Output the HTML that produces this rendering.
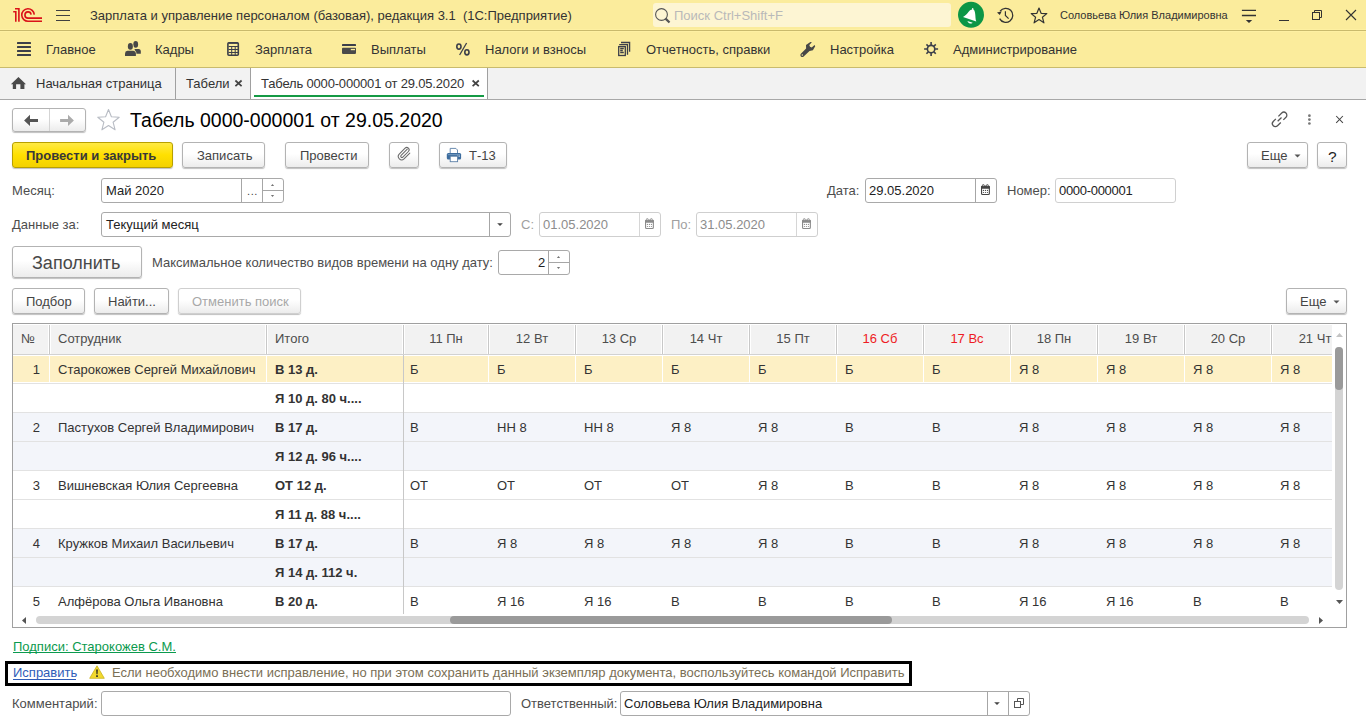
<!DOCTYPE html><html><head><meta charset="utf-8"><style>
*{box-sizing:border-box;margin:0;padding:0}
html,body{width:1366px;height:728px;overflow:hidden;background:#fff}
body{position:relative;font-family:"Liberation Sans",sans-serif;font-size:13px;line-height:15px;color:#333}
.a{position:absolute}
.t{position:absolute;white-space:nowrap;font-size:13px;line-height:15px}
.ybar{background:#FBEC9C}
.btn{position:absolute;border:1px solid #b3b3b3;border-radius:3px;background:linear-gradient(#ffffff,#ffffff 45%,#ececec);box-shadow:0 1px 1px rgba(0,0,0,.25);color:#444;text-align:center}
.inp{position:absolute;border:1px solid #a9a9a9;border-radius:3px;background:#fff}
.inpd{position:absolute;border:1px solid #cfcfcf;border-radius:3px;background:#fff}
.vs{position:absolute;top:0;bottom:0;width:1px;background:#b9b9b9}
.lbl{color:#4d4d4d}
.hd{position:absolute;top:0;height:30px;background:#f2f2f2;border-left:1px solid #fff;border-right:1px solid #fff}
.row{position:absolute;left:0;width:1319px;height:29px;border-bottom:1px solid #e0e0e0}
.sel{background:#FDF0C5}
.alt{background:#F3F5FA}
.b{font-weight:bold}
.red{color:#e0141e}
</style></head><body>
<div class="a ybar" style="left:0;top:0;width:1366px;height:30px"></div>
<div class="a" style="left:0;top:29px;width:1366px;height:1px;background:#FEF0A2"></div>
<div class="a" style="left:0;top:30px;width:1366px;height:1px;background:#C9BA6C"></div>
<div class="a ybar" style="left:0;top:31px;width:1366px;height:36px"></div>
<div class="a" style="left:0;top:31px;width:1366px;height:1px;background:#FEF0A2"></div>
<div class="a" style="left:0;top:67px;width:1366px;height:1px;background:#C9BB6D"></div>
<svg class="a" style="left:10px;top:4px" width="36" height="22" viewBox="10 4 36 22">
<g fill="none" stroke="#DA1219" stroke-width="1.6">
<path d="M13.2 11.7 H15.8 V21.8"/>
<path d="M15 8.7 H18.9 V21.8"/>
<path d="M34.25 14.6 A6.25 6.25 0 1 0 28.25 21.2 H42"/>
<path d="M31.1 14.6 A3.1 3.1 0 1 0 28 18.1 H42"/>
</g></svg>
<div class="a" style="left:56px;top:10px;width:14px;height:1px;background:#404040"></div>
<div class="a" style="left:56px;top:15px;width:14px;height:1px;background:#404040"></div>
<div class="a" style="left:56px;top:20px;width:14px;height:1px;background:#404040"></div>
<div class="t " style="left:90px;top:8px;color:#333">Зарплата и управление персоналом (базовая), редакция 3.1&nbsp; (1С:Предприятие)</div>
<div class="a" style="left:653px;top:3px;width:298px;height:24px;background:#FDF5D3;border-radius:3px"></div>
<svg class="a" style="left:654px;top:7px" width="18" height="18" viewBox="0 0 18 18"><circle cx="7.5" cy="7.5" r="5.9" fill="none" stroke="#555" stroke-width="1.1"/><path d="M11.6 11.6 L15.5 15.5" stroke="#555" stroke-width="2.2"/></svg>
<div class="t " style="left:674px;top:8px;color:#b9b9b9">Поиск Ctrl+Shift+F</div>
<svg class="a" style="left:956px;top:0px" width="30" height="30" viewBox="956 0 30 30"><circle cx="971" cy="14.85" r="13" fill="#0C9646"/>
<path d="M970.5 10 C968.5 11.5 967.5 14 963 17.1 L976.3 21.5 C975.3 19 975.6 16.5 975.2 14 C974.9 11.5 974.4 10.2 973.4 9.6 L973.2 8 L972.2 8.1 L972.1 9.5 C971.5 9.5 971 9.7 970.5 10 Z" fill="#fff"/>
<path d="M967.4 21 L972.7 22.7 C972 24 968.5 24 967.4 21 Z" fill="#fff"/></svg>
<svg class="a" style="left:994px;top:4px" width="22" height="22" viewBox="994 4 22 22"><path d="M1000.1 11.2 A7 7 0 1 1 999.6 18.6" fill="none" stroke="#333" stroke-width="1.3"/><path d="M997 12.4 L1001.8 11.3 L999.8 15.1Z" fill="#333"/><path d="M1005.4 11.2 V15.5 L1008.6 18.6" fill="none" stroke="#333" stroke-width="1.2"/></svg>
<svg class="a" style="left:1030px;top:7px" width="18" height="17" viewBox="0 0 18 17"><path d="M9 1 L11.1 6.3 L16.8 6.6 L12.4 10.2 L13.9 15.8 L9 12.6 L4.1 15.8 L5.6 10.2 L1.2 6.6 L6.9 6.3Z" fill="none" stroke="#333" stroke-width="1.2" stroke-linejoin="round"/></svg>
<div class="t " style="left:1060px;top:8px;font-size:11px;color:#333">Соловьева Юлия Владимировна</div>
<svg class="a" style="left:1240px;top:6px" width="18" height="20" viewBox="1240 6 18 20"><path d="M1241.9 10.4 H1256 M1241.9 15.5 H1256" stroke="#333" stroke-width="1.3"/><path d="M1245.8 19.9 H1252.2 L1249 22.9Z" fill="#333"/></svg>
<div class="a" style="left:1279px;top:20px;width:10px;height:1px;background:#333"></div>
<svg class="a" style="left:1311px;top:9px" width="12" height="12" viewBox="0 0 12 12"><rect x="1.5" y="3.5" width="7" height="7" fill="none" stroke="#333"/><path d="M3.5 3.5 V1.5 H10.5 V8.5 H8.5" fill="none" stroke="#333"/></svg>
<svg class="a" style="left:1345px;top:9px" width="12" height="12" viewBox="0 0 12 12"><path d="M1 1 L11 11 M11 1 L1 11" stroke="#333" stroke-width="1.1"/></svg>
<svg class="a" style="left:16px;top:41px" width="16" height="16" viewBox="16 41 16 16"><g fill="#3c3f4a"><rect x="17" y="42" width="14" height="2" rx="0.5"/><rect x="17" y="46" width="14" height="2" rx="0.5"/><rect x="17" y="50" width="14" height="2" rx="0.5"/><rect x="17" y="54" width="14" height="2" rx="0.5"/></g></svg>
<div class="t " style="left:46px;top:42px;color:#333">Главное</div>
<svg class="a" style="left:122px;top:39px" width="22" height="20" viewBox="122 39 22 20"><g fill="#474747"><ellipse cx="135.7" cy="44.4" rx="2.4" ry="3.3"/><path d="M134.5 49 H139 Q140.8 49.3 140.8 51 V53.8 H135.5Z"/><ellipse cx="130.35" cy="46.4" rx="3" ry="3.7" fill="#FBEC9C"/><path d="M127.5 50.1 H133.3 Q136.4 50.5 136.4 53.5 V56.5 H134 V53.5 Z" fill="#FBEC9C"/><ellipse cx="130.35" cy="46.4" rx="2.5" ry="3.3"/><path d="M127.5 50.8 H133.3 Q135.9 51 135.9 53.5 V55.9 H125 V53.5 Q125 51 127.5 50.8Z"/></g></svg>
<div class="t " style="left:155px;top:42px;color:#333">Кадры</div>
<svg class="a" style="left:225px;top:40px" width="16" height="18" viewBox="225 40 16 18"><rect x="227.9" y="42.7" width="10.4" height="12.5" rx="1" fill="none" stroke="#3c3f4a" stroke-width="1.6"/><rect x="228.5" y="42.5" width="9.5" height="1.3" fill="#3c3f4a"/><rect x="228.5" y="46" width="9.5" height="1" fill="#3c3f4a"/><g fill="#3c3f4a"><rect x="231.2" y="46.5" width="1" height="9"/><rect x="234.7" y="46.5" width="1" height="9"/><rect x="228.5" y="49" width="9.5" height="1"/><rect x="228.5" y="52" width="9.5" height="1"/></g></svg>
<div class="t " style="left:255px;top:42px;color:#333">Зарплата</div>
<svg class="a" style="left:340px;top:42px" width="18" height="14" viewBox="340 42 18 14"><rect x="342" y="44" width="14" height="2" rx="0.6" fill="#3c3f4a"/><rect x="342" y="47.7" width="14" height="6.2" rx="0.8" fill="#4a4a4a"/><rect x="350.8" y="48.9" width="4.2" height="1.3" fill="#FBEC9C"/></svg>
<div class="t " style="left:371px;top:42px;color:#333">Выплаты</div>
<svg class="a" style="left:454px;top:41px" width="18" height="16" viewBox="454 41 18 16"><g fill="none" stroke="#3c3f4a"><ellipse cx="458.9" cy="46.6" rx="2.1" ry="2.6" stroke-width="1.6"/><ellipse cx="466.9" cy="52.3" rx="2.1" ry="2.6" stroke-width="1.6"/><path d="M466.6 43 L459.6 55" stroke-width="1.3"/></g></svg>
<div class="t " style="left:485px;top:42px;color:#333">Налоги и взносы</div>
<svg class="a" style="left:616px;top:41px" width="16" height="17" viewBox="616 41 16 17"><g fill="none" stroke="#3c3f4a" stroke-width="1.3"><rect x="618.7" y="46.6" width="6.6" height="8.9"/><path d="M621 42.5 H629.6 V51.8"/><path d="M619.2 44.6 H627.5 V54.8"/><path d="M620.2 48.5 H623.8 M620.2 50.5 H622.8 M620.2 52.5 H623.8"/></g></svg>
<div class="t " style="left:646px;top:42px;color:#333">Отчетность, справки</div>
<svg class="a" style="left:799px;top:40px" width="18" height="18" viewBox="799 40 18 18"><path d="M806.0 45.0 L810.4 41.9 L811.9 42.2 L809.3 45.0 Q809.5 47.3 811.7 47.6 L814.6 44.9 L815.2 46.3 L812.9 50.3 L809.5 50.9 L803.7 56.5 C802.7 57.4 801 57.1 800.6 56 C800.2 55.1 800.4 54.3 801.1 53.6 L806.1 48.5 Z" fill="#474747"/><circle cx="802.3" cy="54.9" r="0.75" fill="#FBEC9C"/></svg>
<div class="t " style="left:830px;top:42px;color:#333">Настройка</div>
<svg class="a" style="left:922px;top:40px" width="18" height="18" viewBox="922 40 18 18"><g transform="translate(931.1 49.05)"><circle r="3.7" fill="none" stroke="#3c3f4a" stroke-width="1.6"/><g stroke="#3c3f4a" stroke-width="1.6"><path d="M0 -7 V-4 M0 7 V4 M-7 0 H-4 M7 0 H4"/><g transform="rotate(45)"><path d="M0 -6.6 V-4 M0 6.6 V4 M-6.6 0 H-4 M6.6 0 H4"/></g></g></g></svg>
<div class="t " style="left:953px;top:42px;color:#333">Администрирование</div>
<div class="a" style="left:0;top:68px;width:1366px;height:31px;background:#F2F2F2"></div>
<div class="a" style="left:0;top:99px;width:1366px;height:1px;background:#A8A8A8"></div>
<div class="a" style="left:176px;top:68px;width:74px;height:31px;background:#F2F2F2"></div>
<div class="a" style="left:251px;top:68px;width:236px;height:31px;background:#fff"></div>
<div class="a" style="left:175px;top:68px;width:1px;height:31px;background:#A0A0A0"></div>
<div class="a" style="left:250px;top:68px;width:1px;height:31px;background:#A0A0A0"></div>
<div class="a" style="left:487px;top:68px;width:1px;height:31px;background:#A0A0A0"></div>
<div class="a" style="left:254px;top:95px;width:230px;height:2px;background:#159A45"></div>
<svg class="a" style="left:10px;top:76px" width="17" height="14" viewBox="10 76 17 14"><path d="M10.9 84.2 L18.45 76.9 L26 84.2 H24.4 V89 H20.4 V84.2 H16.1 V89 H12.8 V84.2 Z" fill="#4a4a4a"/></svg>
<div class="t " style="left:36px;top:76px;color:#333">Начальная страница</div>
<div class="t " style="left:186px;top:76px;color:#333">Табели</div>
<svg class="a" style="left:233px;top:78px" width="11" height="11" viewBox="233 78 11 11"><path d="M235.4 80.5 L241.6 86.2 M241.6 80.5 L235.4 86.2" stroke="#444" stroke-width="1.7"/></svg>
<div class="t " style="left:261px;top:76px;color:#333;letter-spacing:-0.17px">Табель 0000-000001 от 29.05.2020</div>
<svg class="a" style="left:470px;top:78px" width="11" height="11" viewBox="470 78 11 11"><path d="M472.6 80.5 L478.8 86.2 M478.8 80.5 L472.6 86.2" stroke="#444" stroke-width="1.7"/></svg>
<div class="btn" style="left:12px;top:108px;width:74px;height:24px"></div>
<div class="a" style="left:49px;top:109px;width:1px;height:22px;background:#d4d4d4"></div>
<svg class="a" style="left:22px;top:112px" width="54" height="16" viewBox="22 112 54 16"><path d="M24.1 120.4 L30 114.8 V118.9 H38 V121.9 H30 V126Z" fill="#555"/><path d="M73.9 120.4 L68 114.8 V118.9 H60.1 V121.9 H68 V126Z" fill="#ababab"/></svg>
<svg class="a" style="left:96px;top:108px" width="25" height="24" viewBox="0 0 25 24"><path d="M12.5 1.5 L15.4 8.8 L23.2 9.2 L17.1 14.2 L19.1 21.8 L12.5 17.5 L5.9 21.8 L7.9 14.2 L1.8 9.2 L9.6 8.8Z" fill="none" stroke="#b8bcc4" stroke-width="1.1" stroke-linejoin="round"/></svg>
<div class="t" style="left:130px;top:109px;font-size:19.5px;line-height:22px;color:#000">Табель 0000-000001 от 29.05.2020</div>
<svg class="a" style="left:1268px;top:108px" width="24" height="24" viewBox="1268 108 24 24"><g transform="rotate(-45 1279.6 119.4)" fill="none" stroke="#555" stroke-width="1.25"><path d="M1280.9 116.4 H1285.6 A3.0 3.0 0 0 1 1285.6 122.4 H1281.9"/><path d="M1278.3 122.4 H1273.6 A3.0 3.0 0 0 1 1273.6 116.4 H1277.3"/><path d="M1276.9 119.4 H1282.3"/></g></svg>
<svg class="a" style="left:1306px;top:112px" width="8" height="16" viewBox="1306 112 8 16"><g fill="#777"><circle cx="1309.4" cy="115.7" r="1.35"/><circle cx="1309.4" cy="119.6" r="1.35"/><circle cx="1309.4" cy="123.5" r="1.35"/></g></svg>
<svg class="a" style="left:1334px;top:114px" width="11" height="11" viewBox="1334 114 11 11"><path d="M1336.2 116 L1342.9 122.9 M1342.9 116 L1336.2 122.9" stroke="#444" stroke-width="1.05"/></svg>
<div class="btn" style="left:12px;top:142px;width:161px;height:26px;background:linear-gradient(#FFEA45,#FFE000 50%,#F3D100);border-color:#B8A000;color:#333"></div>
<div class="t b" style="left:26px;top:148px;color:#383838">Провести и закрыть</div>
<div class="btn" style="left:182px;top:142px;width:83px;height:26px"></div>
<div class="t " style="left:197px;top:148px;color:#444">Записать</div>
<div class="btn" style="left:285px;top:142px;width:84px;height:26px"></div>
<div class="t " style="left:300px;top:148px;color:#444">Провести</div>
<div class="btn" style="left:389px;top:142px;width:30px;height:26px"></div>
<svg class="a" style="left:394px;top:145px" width="20" height="20" viewBox="394 145 20 20"><path d="M407.3 149.2 L401.1 155.4 A1.2 1.2 0 0 0 402.8 157.1 L408.4 151.5 A2.3 2.3 0 0 0 405.1 148.2 L399.2 154.1 A3.4 3.4 0 0 0 404 158.9 L409.8 153.1" fill="none" stroke="#6a6a6a" stroke-width="1.05" stroke-linecap="round"/></svg>
<div class="btn" style="left:439px;top:142px;width:68px;height:26px"></div>
<svg class="a" style="left:445px;top:146px" width="18" height="18" viewBox="445 146 18 18"><path d="M450.2 153.5 V148.4 H455.9 L457.5 150 V153.5" fill="#fff" stroke="#5a7ea6" stroke-width="0.9"/><rect x="446.8" y="153" width="14.3" height="6.6" rx="1.5" fill="#3C6C9E"/><rect x="447.8" y="154.3" width="12.3" height="0.8" fill="#7fa3c7"/><rect x="457.3" y="155.6" width="1" height="1" fill="#fff"/><rect x="458.8" y="155.6" width="1" height="1" fill="#fff"/><rect x="450.2" y="156.2" width="7.4" height="5.5" fill="#fff" stroke="#5a7ea6" stroke-width="0.9"/></svg>
<div class="t " style="left:469px;top:148px;color:#444">Т-13</div>
<div class="btn" style="left:1247px;top:142px;width:61px;height:26px"></div>
<div class="t " style="left:1261px;top:148px;color:#444">Еще</div>
<svg class="a" style="left:1294px;top:154px" width="7" height="4" viewBox="0 0 7 4"><path d="M0.5 0.5H6.5L3.5 3.5Z" fill="#555"/></svg>
<div class="btn" style="left:1317px;top:142px;width:30px;height:26px"></div>
<div class="t" style="left:1328px;top:148px;font-size:15.5px;line-height:18px;color:#222">?</div>
<div class="t lbl" style="left:12px;top:183px;">Месяц:</div>
<div class="inp" style="left:101px;top:178px;width:183px;height:25px"></div>
<div class="a" style="left:241px;top:179px;width:1px;height:23px;background:#a6a6a6"></div>
<div class="a" style="left:262px;top:179px;width:1px;height:23px;background:#a6a6a6"></div>
<div class="a" style="left:263px;top:190px;width:20px;height:1px;background:#a6a6a6"></div>
<div class="t " style="left:247px;top:184px;color:#444;font-size:11px;letter-spacing:0.6px">...</div>
<svg class="a" style="left:270px;top:183px" width="5" height="4" viewBox="0 0 5 4"><path d="M0.9 2.8H4.1L2.5 1.2Z" fill="#444"/></svg>
<svg class="a" style="left:270px;top:194px" width="5" height="4" viewBox="0 0 5 4"><path d="M0.9 1.2H4.1L2.5 2.8Z" fill="#444"/></svg>
<div class="t " style="left:106px;top:183px;color:#222">Май 2020</div>
<div class="t lbl" style="left:827px;top:183px;">Дата:</div>
<div class="inp" style="left:865px;top:178px;width:132px;height:25px"></div>
<div class="a" style="left:975px;top:179px;width:1px;height:23px;background:#a6a6a6"></div>
<svg class="a" style="left:980px;top:184px" width="12" height="12" viewBox="980 184 12 12"><rect x="981.55" y="186.3" width="7.8" height="8.2" rx="1" fill="#fff" stroke="#444" stroke-width="1.1"/><rect x="981" y="185.8" width="8.9" height="2.9" rx="1" fill="#444"/><circle cx="983.3" cy="185.3" r="0.85" fill="#fff" stroke="#444" stroke-width="0.7"/><circle cx="987.4" cy="185.3" r="0.85" fill="#fff" stroke="#444" stroke-width="0.7"/><circle cx="983.4" cy="190.4" r="0.6" fill="#444"/><circle cx="983.4" cy="192.5" r="0.6" fill="#444"/><circle cx="985.4" cy="190.4" r="0.6" fill="#444"/><circle cx="985.4" cy="192.5" r="0.6" fill="#444"/><circle cx="987.4" cy="190.4" r="0.6" fill="#444"/><circle cx="987.4" cy="192.5" r="0.6" fill="#444"/></svg>
<div class="t " style="left:869px;top:183px;color:#222">29.05.2020</div>
<div class="t lbl" style="left:1007px;top:183px;">Номер:</div>
<div class="inpd" style="left:1055px;top:178px;width:121px;height:25px;border-color:#d0d0d0"></div>
<div class="t " style="left:1059px;top:183px;color:#222;letter-spacing:-0.3px">0000-000001</div>
<div class="t lbl" style="left:12px;top:217px;">Данные за:</div>
<div class="inp" style="left:101px;top:212px;width:410px;height:25px"></div>
<div class="a" style="left:489px;top:213px;width:1px;height:23px;background:#a6a6a6"></div>
<svg class="a" style="left:496px;top:222px" width="8" height="5" viewBox="0 0 8 5"><path d="M1.2 1.3H6.8L4 4Z" fill="#444"/></svg>
<div class="t " style="left:106px;top:217px;color:#222">Текущий месяц</div>
<div class="t " style="left:521px;top:217px;color:#a0a0a0">С:</div>
<div class="inpd" style="left:539px;top:212px;width:122px;height:25px"></div>
<div class="a" style="left:639px;top:213px;width:1px;height:23px;background:#d6d6d6"></div>
<svg class="a" style="left:644px;top:218px" width="12" height="12" viewBox="644 218 12 12"><rect x="645.55" y="220.3" width="7.8" height="8.2" rx="1" fill="#fff" stroke="#8a8a8a" stroke-width="1.1"/><rect x="645" y="219.8" width="8.9" height="2.9" rx="1" fill="#8a8a8a"/><circle cx="647.3" cy="219.3" r="0.85" fill="#fff" stroke="#8a8a8a" stroke-width="0.7"/><circle cx="651.4" cy="219.3" r="0.85" fill="#fff" stroke="#8a8a8a" stroke-width="0.7"/><circle cx="647.4" cy="224.4" r="0.6" fill="#8a8a8a"/><circle cx="647.4" cy="226.5" r="0.6" fill="#8a8a8a"/><circle cx="649.4" cy="224.4" r="0.6" fill="#8a8a8a"/><circle cx="649.4" cy="226.5" r="0.6" fill="#8a8a8a"/><circle cx="651.4" cy="224.4" r="0.6" fill="#8a8a8a"/><circle cx="651.4" cy="226.5" r="0.6" fill="#8a8a8a"/></svg>
<div class="t " style="left:543px;top:217px;color:#8c8c8c">01.05.2020</div>
<div class="t " style="left:671px;top:217px;color:#a0a0a0">По:</div>
<div class="inpd" style="left:696px;top:212px;width:122px;height:25px"></div>
<div class="a" style="left:796px;top:213px;width:1px;height:23px;background:#d6d6d6"></div>
<svg class="a" style="left:801px;top:218px" width="12" height="12" viewBox="801 218 12 12"><rect x="802.55" y="220.3" width="7.8" height="8.2" rx="1" fill="#fff" stroke="#8a8a8a" stroke-width="1.1"/><rect x="802" y="219.8" width="8.9" height="2.9" rx="1" fill="#8a8a8a"/><circle cx="804.3" cy="219.3" r="0.85" fill="#fff" stroke="#8a8a8a" stroke-width="0.7"/><circle cx="808.4" cy="219.3" r="0.85" fill="#fff" stroke="#8a8a8a" stroke-width="0.7"/><circle cx="804.4" cy="224.4" r="0.6" fill="#8a8a8a"/><circle cx="804.4" cy="226.5" r="0.6" fill="#8a8a8a"/><circle cx="806.4" cy="224.4" r="0.6" fill="#8a8a8a"/><circle cx="806.4" cy="226.5" r="0.6" fill="#8a8a8a"/><circle cx="808.4" cy="224.4" r="0.6" fill="#8a8a8a"/><circle cx="808.4" cy="226.5" r="0.6" fill="#8a8a8a"/></svg>
<div class="t " style="left:700px;top:217px;color:#8c8c8c">31.05.2020</div>
<div class="btn" style="left:12px;top:246px;width:130px;height:32px"></div>
<div class="t" style="left:32px;top:253px;font-size:18px;line-height:20px;color:#484848">Заполнить</div>
<div class="t lbl" style="left:152px;top:255px;">Максимальное количество видов времени на одну дату:</div>
<div class="inp" style="left:498px;top:250px;width:72px;height:25px"></div>
<div class="a" style="left:548px;top:251px;width:1px;height:23px;background:#a6a6a6"></div>
<div class="a" style="left:549px;top:262px;width:20px;height:1px;background:#a6a6a6"></div>
<svg class="a" style="left:556px;top:255px" width="5" height="4" viewBox="0 0 5 4"><path d="M0.9 2.8H4.1L2.5 1.2Z" fill="#444"/></svg>
<svg class="a" style="left:556px;top:266px" width="5" height="4" viewBox="0 0 5 4"><path d="M0.9 1.2H4.1L2.5 2.8Z" fill="#444"/></svg>
<div class="t " style="left:538px;top:255px;color:#222">2</div>
<div class="btn" style="left:12px;top:288px;width:73px;height:26px"></div>
<div class="t " style="left:26px;top:294px;color:#444">Подбор</div>
<div class="btn" style="left:94px;top:288px;width:75px;height:26px"></div>
<div class="t " style="left:108px;top:294px;color:#444">Найти...</div>
<div class="btn" style="left:178px;top:288px;width:123px;height:26px;border-color:#cfcfcf"></div>
<div class="t " style="left:192px;top:294px;color:#a8a8a8">Отменить поиск</div>
<div class="btn" style="left:1286px;top:288px;width:61px;height:26px"></div>
<div class="t " style="left:1300px;top:294px;color:#444">Еще</div>
<svg class="a" style="left:1333px;top:300px" width="7" height="4" viewBox="0 0 7 4"><path d="M0.5 0.5H6.5L3.5 3.5Z" fill="#555"/></svg>
<div class="a" style="left:12px;top:323px;width:1335px;height:305px;border:1px solid #A0A0A0;background:#fff;overflow:hidden">
<div class="a" style="left:0;top:0;width:1319px;height:290px;overflow:hidden">
<div class="a" style="left:0;top:0;width:1319px;height:30px;background:#F2F2F2"></div>
<div class="a" style="left:35px;top:0;width:3px;height:30px;background:#fff"></div>
<div class="a" style="left:36px;top:0;width:1px;height:30px;background:#C8C8C8"></div>
<div class="a" style="left:252px;top:0;width:3px;height:30px;background:#fff"></div>
<div class="a" style="left:253px;top:0;width:1px;height:30px;background:#C8C8C8"></div>
<div class="a" style="left:389px;top:0;width:3px;height:30px;background:#fff"></div>
<div class="a" style="left:390px;top:0;width:1px;height:30px;background:#C8C8C8"></div>
<div class="a" style="left:474px;top:0;width:3px;height:30px;background:#fff"></div>
<div class="a" style="left:475px;top:0;width:1px;height:30px;background:#C8C8C8"></div>
<div class="a" style="left:561px;top:0;width:3px;height:30px;background:#fff"></div>
<div class="a" style="left:562px;top:0;width:1px;height:30px;background:#C8C8C8"></div>
<div class="a" style="left:648px;top:0;width:3px;height:30px;background:#fff"></div>
<div class="a" style="left:649px;top:0;width:1px;height:30px;background:#C8C8C8"></div>
<div class="a" style="left:735px;top:0;width:3px;height:30px;background:#fff"></div>
<div class="a" style="left:736px;top:0;width:1px;height:30px;background:#C8C8C8"></div>
<div class="a" style="left:822px;top:0;width:3px;height:30px;background:#fff"></div>
<div class="a" style="left:823px;top:0;width:1px;height:30px;background:#C8C8C8"></div>
<div class="a" style="left:909px;top:0;width:3px;height:30px;background:#fff"></div>
<div class="a" style="left:910px;top:0;width:1px;height:30px;background:#C8C8C8"></div>
<div class="a" style="left:996px;top:0;width:3px;height:30px;background:#fff"></div>
<div class="a" style="left:997px;top:0;width:1px;height:30px;background:#C8C8C8"></div>
<div class="a" style="left:1083px;top:0;width:3px;height:30px;background:#fff"></div>
<div class="a" style="left:1084px;top:0;width:1px;height:30px;background:#C8C8C8"></div>
<div class="a" style="left:1170px;top:0;width:3px;height:30px;background:#fff"></div>
<div class="a" style="left:1171px;top:0;width:1px;height:30px;background:#C8C8C8"></div>
<div class="a" style="left:1257px;top:0;width:3px;height:30px;background:#fff"></div>
<div class="a" style="left:1258px;top:0;width:1px;height:30px;background:#C8C8C8"></div>
<div class="a" style="left:1344px;top:0;width:3px;height:30px;background:#fff"></div>
<div class="a" style="left:1345px;top:0;width:1px;height:30px;background:#C8C8C8"></div>
<div class="a" style="left:0;top:0;width:1319px;height:1px;background:#fff"></div>
<div class="a" style="left:0;top:30px;width:1319px;height:1px;background:#D2D2D2"></div>
<div class="t " style="left:8px;top:7px;color:#4d4d4d">№</div>
<div class="t " style="left:45px;top:7px;color:#4d4d4d">Сотрудник</div>
<div class="t " style="left:262px;top:7px;color:#4d4d4d">Итого</div>
<div class="t" style="left:391px;top:7px;width:84px;text-align:center;color:#4d4d4d">11 Пн</div>
<div class="t" style="left:476px;top:7px;width:86px;text-align:center;color:#4d4d4d">12 Вт</div>
<div class="t" style="left:563px;top:7px;width:86px;text-align:center;color:#4d4d4d">13 Ср</div>
<div class="t" style="left:650px;top:7px;width:86px;text-align:center;color:#4d4d4d">14 Чт</div>
<div class="t" style="left:737px;top:7px;width:86px;text-align:center;color:#4d4d4d">15 Пт</div>
<div class="t" style="left:824px;top:7px;width:86px;text-align:center;color:#EE1C24">16 Сб</div>
<div class="t" style="left:911px;top:7px;width:86px;text-align:center;color:#EE1C24">17 Вс</div>
<div class="t" style="left:998px;top:7px;width:86px;text-align:center;color:#4d4d4d">18 Пн</div>
<div class="t" style="left:1085px;top:7px;width:86px;text-align:center;color:#4d4d4d">19 Вт</div>
<div class="t" style="left:1172px;top:7px;width:86px;text-align:center;color:#4d4d4d">20 Ср</div>
<div class="t" style="left:1259px;top:7px;width:86px;text-align:center;color:#4d4d4d">21 Чт</div>
<div class="a" style="left:0;top:31px;width:1319px;height:28px;background:#FDF0C5"></div>
<div class="a" style="left:0;top:59px;width:1319px;height:1px;background:#E2E2E2"></div>
<div class="a" style="left:0;top:58px;width:1319px;height:1px;background:#fff"></div>
<div class="a" style="left:0;top:31px;width:1319px;height:1px;background:#fff"></div>
<div class="a" style="left:36px;top:31px;width:1px;height:28px;background:#fff"></div>
<div class="a" style="left:253px;top:31px;width:1px;height:28px;background:#fff"></div>
<div class="a" style="left:390px;top:31px;width:1px;height:28px;background:#fff"></div>
<div class="a" style="left:475px;top:31px;width:1px;height:28px;background:#fff"></div>
<div class="a" style="left:562px;top:31px;width:1px;height:28px;background:#fff"></div>
<div class="a" style="left:649px;top:31px;width:1px;height:28px;background:#fff"></div>
<div class="a" style="left:736px;top:31px;width:1px;height:28px;background:#fff"></div>
<div class="a" style="left:823px;top:31px;width:1px;height:28px;background:#fff"></div>
<div class="a" style="left:910px;top:31px;width:1px;height:28px;background:#fff"></div>
<div class="a" style="left:997px;top:31px;width:1px;height:28px;background:#fff"></div>
<div class="a" style="left:1084px;top:31px;width:1px;height:28px;background:#fff"></div>
<div class="a" style="left:1171px;top:31px;width:1px;height:28px;background:#fff"></div>
<div class="a" style="left:1258px;top:31px;width:1px;height:28px;background:#fff"></div>
<div class="a" style="left:1345px;top:31px;width:1px;height:28px;background:#fff"></div>
<div class="t" style="left:0;top:38px;width:27px;text-align:right;color:#333">1</div>
<div class="t " style="left:45px;top:38px;color:#333">Старокожев Сергей Михайлович</div>
<div class="t b" style="left:262px;top:38px;color:#333">В 13 д.</div>
<div class="t " style="left:397px;top:38px;color:#333">Б</div>
<div class="t " style="left:484px;top:38px;color:#333">Б</div>
<div class="t " style="left:571px;top:38px;color:#333">Б</div>
<div class="t " style="left:658px;top:38px;color:#333">Б</div>
<div class="t " style="left:745px;top:38px;color:#333">Б</div>
<div class="t " style="left:832px;top:38px;color:#333">Б</div>
<div class="t " style="left:919px;top:38px;color:#333">Б</div>
<div class="t " style="left:1006px;top:38px;color:#333">Я 8</div>
<div class="t " style="left:1093px;top:38px;color:#333">Я 8</div>
<div class="t " style="left:1180px;top:38px;color:#333">Я 8</div>
<div class="t " style="left:1267px;top:38px;color:#333">Я 8</div>
<div class="a" style="left:0;top:60px;width:1319px;height:28px;background:#fff"></div>
<div class="a" style="left:0;top:88px;width:1319px;height:1px;background:#E2E2E2"></div>
<div class="t b" style="left:262px;top:67px;color:#333">Я 10 д. 80 ч....</div>
<div class="a" style="left:0;top:89px;width:1319px;height:28px;background:#F3F5FA"></div>
<div class="a" style="left:0;top:117px;width:1319px;height:1px;background:#E2E2E2"></div>
<div class="t" style="left:0;top:96px;width:27px;text-align:right;color:#333">2</div>
<div class="t " style="left:45px;top:96px;color:#333">Пастухов Сергей Владимирович</div>
<div class="t b" style="left:262px;top:96px;color:#333">В 17 д.</div>
<div class="t " style="left:397px;top:96px;color:#333">В</div>
<div class="t " style="left:484px;top:96px;color:#333">НН 8</div>
<div class="t " style="left:571px;top:96px;color:#333">НН 8</div>
<div class="t " style="left:658px;top:96px;color:#333">Я 8</div>
<div class="t " style="left:745px;top:96px;color:#333">Я 8</div>
<div class="t " style="left:832px;top:96px;color:#333">В</div>
<div class="t " style="left:919px;top:96px;color:#333">В</div>
<div class="t " style="left:1006px;top:96px;color:#333">Я 8</div>
<div class="t " style="left:1093px;top:96px;color:#333">Я 8</div>
<div class="t " style="left:1180px;top:96px;color:#333">Я 8</div>
<div class="t " style="left:1267px;top:96px;color:#333">Я 8</div>
<div class="a" style="left:0;top:118px;width:1319px;height:28px;background:#F3F5FA"></div>
<div class="a" style="left:0;top:146px;width:1319px;height:1px;background:#E2E2E2"></div>
<div class="t b" style="left:262px;top:125px;color:#333">Я 12 д. 96 ч....</div>
<div class="a" style="left:0;top:147px;width:1319px;height:28px;background:#fff"></div>
<div class="a" style="left:0;top:175px;width:1319px;height:1px;background:#E2E2E2"></div>
<div class="t" style="left:0;top:154px;width:27px;text-align:right;color:#333">3</div>
<div class="t " style="left:45px;top:154px;color:#333">Вишневская Юлия Сергеевна</div>
<div class="t b" style="left:262px;top:154px;color:#333">ОТ 12 д.</div>
<div class="t " style="left:397px;top:154px;color:#333">ОТ</div>
<div class="t " style="left:484px;top:154px;color:#333">ОТ</div>
<div class="t " style="left:571px;top:154px;color:#333">ОТ</div>
<div class="t " style="left:658px;top:154px;color:#333">ОТ</div>
<div class="t " style="left:745px;top:154px;color:#333">Я 8</div>
<div class="t " style="left:832px;top:154px;color:#333">В</div>
<div class="t " style="left:919px;top:154px;color:#333">В</div>
<div class="t " style="left:1006px;top:154px;color:#333">Я 8</div>
<div class="t " style="left:1093px;top:154px;color:#333">Я 8</div>
<div class="t " style="left:1180px;top:154px;color:#333">Я 8</div>
<div class="t " style="left:1267px;top:154px;color:#333">Я 8</div>
<div class="a" style="left:0;top:176px;width:1319px;height:28px;background:#fff"></div>
<div class="a" style="left:0;top:204px;width:1319px;height:1px;background:#E2E2E2"></div>
<div class="t b" style="left:262px;top:183px;color:#333">Я 11 д. 88 ч....</div>
<div class="a" style="left:0;top:205px;width:1319px;height:28px;background:#F3F5FA"></div>
<div class="a" style="left:0;top:233px;width:1319px;height:1px;background:#E2E2E2"></div>
<div class="t" style="left:0;top:212px;width:27px;text-align:right;color:#333">4</div>
<div class="t " style="left:45px;top:212px;color:#333">Кружков Михаил Васильевич</div>
<div class="t b" style="left:262px;top:212px;color:#333">В 17 д.</div>
<div class="t " style="left:397px;top:212px;color:#333">В</div>
<div class="t " style="left:484px;top:212px;color:#333">Я 8</div>
<div class="t " style="left:571px;top:212px;color:#333">Я 8</div>
<div class="t " style="left:658px;top:212px;color:#333">Я 8</div>
<div class="t " style="left:745px;top:212px;color:#333">Я 8</div>
<div class="t " style="left:832px;top:212px;color:#333">В</div>
<div class="t " style="left:919px;top:212px;color:#333">В</div>
<div class="t " style="left:1006px;top:212px;color:#333">Я 8</div>
<div class="t " style="left:1093px;top:212px;color:#333">Я 8</div>
<div class="t " style="left:1180px;top:212px;color:#333">Я 8</div>
<div class="t " style="left:1267px;top:212px;color:#333">Я 8</div>
<div class="a" style="left:0;top:234px;width:1319px;height:28px;background:#F3F5FA"></div>
<div class="a" style="left:0;top:262px;width:1319px;height:1px;background:#E2E2E2"></div>
<div class="t b" style="left:262px;top:241px;color:#333">Я 14 д. 112 ч.</div>
<div class="a" style="left:0;top:263px;width:1319px;height:28px;background:#fff"></div>
<div class="a" style="left:0;top:291px;width:1319px;height:1px;background:#E2E2E2"></div>
<div class="t" style="left:0;top:270px;width:27px;text-align:right;color:#333">5</div>
<div class="t " style="left:45px;top:270px;color:#333">Алфёрова Ольга Ивановна</div>
<div class="t b" style="left:262px;top:270px;color:#333">В 20 д.</div>
<div class="t " style="left:397px;top:270px;color:#333">В</div>
<div class="t " style="left:484px;top:270px;color:#333">Я 16</div>
<div class="t " style="left:571px;top:270px;color:#333">Я 16</div>
<div class="t " style="left:658px;top:270px;color:#333">В</div>
<div class="t " style="left:745px;top:270px;color:#333">В</div>
<div class="t " style="left:832px;top:270px;color:#333">В</div>
<div class="t " style="left:919px;top:270px;color:#333">В</div>
<div class="t " style="left:1006px;top:270px;color:#333">Я 16</div>
<div class="t " style="left:1093px;top:270px;color:#333">Я 16</div>
<div class="t " style="left:1180px;top:270px;color:#333">В</div>
<div class="t " style="left:1267px;top:270px;color:#333">В</div>
<div class="a" style="left:390px;top:31px;width:1px;height:270px;background:#C8C8C8"></div>
</div>
<div class="a" style="left:1319px;top:0;width:14px;height:303px;background:#fff"></div>
<svg class="a" style="left:1323px;top:9px" width="7" height="4" viewBox="0 0 7 4"><path d="M0 4H7L3.5 0Z" fill="#c4c4c4"/></svg>
<div class="a" style="left:1322px;top:23px;width:8px;height:243px;background:#D4D4D4;border-radius:4px"></div>
<div class="a" style="left:1322px;top:23px;width:8px;height:43px;background:#9A9A9A;border-radius:4px"></div>
<svg class="a" style="left:1323px;top:276px" width="7" height="4" viewBox="0 0 7 4"><path d="M0 0H7L3.5 4Z" fill="#555"/></svg>
<div class="a" style="left:0;top:290px;width:1319px;height:13px;background:#fff"></div>
<svg class="a" style="left:9px;top:293px" width="4" height="7" viewBox="0 0 4 7"><path d="M4 0V7L0 3.5Z" fill="#555"/></svg>
<div class="a" style="left:23px;top:292px;width:1273px;height:8px;background:#D4D4D4;border-radius:4px"></div>
<div class="a" style="left:437px;top:292px;width:442px;height:8px;background:#9A9A9A;border-radius:4px"></div>
<svg class="a" style="left:1306px;top:293px" width="4" height="7" viewBox="0 0 4 7"><path d="M0 0V7L4 3.5Z" fill="#555"/></svg>
</div>
<div class="t " style="left:13px;top:639px;color:#0B9A4E">Подписи: Старокожев С.М.</div>
<div class="a" style="left:13px;top:652px;width:163px;height:1px;background:#0B9A4E"></div>
<div class="a" style="left:5px;top:661px;width:907px;height:25px;border:3px solid #000"></div>
<div class="t " style="left:13px;top:665px;color:#2F5DB8">Исправить</div>
<div class="a" style="left:13px;top:679px;width:63px;height:1px;background:#2F5DB8"></div>
<svg class="a" style="left:89px;top:665px" width="16" height="14" viewBox="0 0 16 14"><path d="M8 0.8 L15.3 13.3 H0.7Z" fill="#F2D92E" stroke="#C9B21C" stroke-width="0.8" stroke-linejoin="round"/><path d="M7.2 4.5 H8.8 L8.5 9.2 H7.5Z M7.2 10.3 H8.8 V11.9 H7.2Z" fill="#222"/></svg>
<div class="t " style="left:112px;top:665px;color:#7A6F55">Если необходимо внести исправление, но при этом сохранить данный экземпляр документа, воспользуйтесь командой Исправить</div>
<div class="t lbl" style="left:12px;top:696px;">Комментарий:</div>
<div class="inp" style="left:101px;top:691px;width:410px;height:25px"></div>
<div class="t lbl" style="left:521px;top:696px;">Ответственный:</div>
<div class="inp" style="left:620px;top:691px;width:410px;height:25px"></div>
<div class="a" style="left:987px;top:692px;width:1px;height:23px;background:#a6a6a6"></div>
<div class="a" style="left:1008px;top:692px;width:1px;height:23px;background:#a6a6a6"></div>
<svg class="a" style="left:993px;top:701px" width="8" height="5" viewBox="0 0 8 5"><path d="M1.2 1.3H6.8L4 4Z" fill="#444"/></svg>
<svg class="a" style="left:1014px;top:698px" width="10" height="10" viewBox="0 0 10 10"><rect x="0.5" y="3.5" width="6" height="6" fill="#fff" stroke="#555"/><path d="M3.5 3.5 V0.5 H9.5 V6.5 H6.5" fill="none" stroke="#555"/></svg>
<div class="t " style="left:624px;top:696px;color:#222">Соловьева Юлия Владимировна</div>
</body></html>
